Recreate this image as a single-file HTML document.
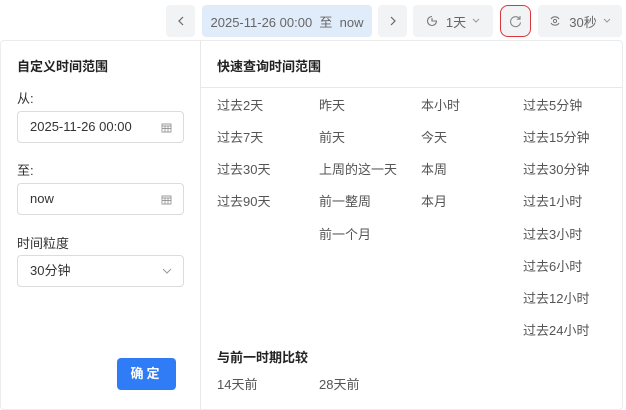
<!DOCTYPE html>
<html><head><meta charset="utf-8"><style>
*{box-sizing:border-box;margin:0;padding:0}
body{width:626px;height:406px;background:#fff;font-family:"Liberation Sans","Noto Sans CJK SC",sans-serif;position:relative;overflow:hidden;color:#333}
.btn{position:absolute;top:5px;height:32px;background:#f2f3f5;border-radius:4px;color:#666;font-size:13px;display:flex;align-items:center;justify-content:center}
.panel{position:absolute;left:0;top:40px;width:623px;height:370px;border:1px solid #ececec;border-radius:4px;background:#fff}
.a{position:absolute;font-size:13px;color:#555;white-space:nowrap}
.h{position:absolute;font-size:13px;font-weight:bold;color:#222}
.inp{position:absolute;left:17px;width:167px;height:32px;border:1px solid #dcdcdc;border-radius:4px;font-size:13px;color:#333;padding-left:12px;line-height:30px}
.inp svg{position:absolute;right:11px;top:10px}
</style></head><body>
<div class="btn" style="left:166px;width:29px"><svg width="8" height="10"><path d="M6 1L2 5l4 4" fill="none" stroke="#666" stroke-width="1.2"/></svg></div>
<div class="btn" style="left:202px;width:170px;background:#e1ecfb">2025-11-26 00:00&nbsp;&nbsp;至&nbsp;&nbsp;now</div>
<div class="btn" style="left:378px;width:29px"><svg width="8" height="10"><path d="M2 1l4 4-4 4" fill="none" stroke="#666" stroke-width="1.2"/></svg></div>
<div class="btn" style="left:413px;width:80px"><svg width="12" height="12" style="margin-right:8px"><path d="M6 1.5A4.5 4.5 0 1 0 10.5 6H6V3" fill="none" stroke="#777" stroke-width="1.1"/></svg>1天<svg width="8" height="6" style="margin-left:6px"><path d="M1 1l3 3 3-3" fill="none" stroke="#999"/></svg></div>
<div class="btn" style="left:500px;width:31px;border:1px solid #d9363e;border-radius:8px"><svg width="13" height="13"><path d="M10.8 4A5 5 0 1 0 11.5 7.5M11 1v3.2H7.8" fill="none" stroke="#888" stroke-width="1.1"/></svg></div>
<div class="btn" style="left:538px;width:84px"><svg width="12" height="12" style="margin-right:8px"><path d="M2 4A4.5 4 0 0 1 10 4M2 8A4.5 4 0 0 0 10 8" fill="none" stroke="#777" stroke-width="1.1"/><circle cx="6" cy="6" r="1.6" fill="none" stroke="#777"/></svg>30秒<svg width="8" height="6" style="margin-left:6px"><path d="M1 1l3 3 3-3" fill="none" stroke="#999"/></svg></div>
<div class="panel">
<div style="position:absolute;left:199px;top:0;bottom:0;width:1px;background:#e8e8e8"></div>
<div style="position:absolute;left:200px;right:0;top:46px;height:1px;background:#e8e8e8"></div>
</div>
<div class="h" style="left:17px;top:56px">自定义时间范围</div>
<div class="a" style="left:17px;top:88px;color:#333">从:</div>
<div class="inp" style="top:111px">2025-11-26 00:00<svg width="11" height="11"><path d="M1 2h9v8H1zM1 4h9M1 6.5h9M4 4v6M7 4v6" fill="none" stroke="#999" stroke-width="0.9"/></svg></div>
<div class="a" style="left:17px;top:160px;color:#333">至:</div>
<div class="inp" style="top:183px">now<svg width="11" height="11"><path d="M1 2h9v8H1zM1 4h9M1 6.5h9M4 4v6M7 4v6" fill="none" stroke="#999" stroke-width="0.9"/></svg></div>
<div class="a" style="left:17px;top:233px;color:#333">时间粒度</div>
<div class="inp" style="top:255px">30分钟<svg width="10" height="7" style="top:12px"><path d="M1 1l4 4 4-4" fill="none" stroke="#999"/></svg></div>
<div style="position:absolute;left:117px;top:358px;width:59px;height:32px;background:#2f7cf6;border-radius:4px;color:#fff;font-size:13px;font-weight:bold;text-align:center;line-height:32px;letter-spacing:3px">确定</div>
<div class="h" style="left:217px;top:56px">快速查询时间范围</div>
<div class="a" style="left:217px;top:95px">过去2天</div><div class="a" style="left:217px;top:127px">过去7天</div><div class="a" style="left:217px;top:159px">过去30天</div><div class="a" style="left:217px;top:191px">过去90天</div>
<div class="a" style="left:319px;top:95px">昨天</div><div class="a" style="left:319px;top:127px">前天</div><div class="a" style="left:319px;top:159px">上周的这一天</div><div class="a" style="left:319px;top:191px">前一整周</div><div class="a" style="left:319px;top:224px">前一个月</div>
<div class="a" style="left:421px;top:95px">本小时</div><div class="a" style="left:421px;top:127px">今天</div><div class="a" style="left:421px;top:159px">本周</div><div class="a" style="left:421px;top:191px">本月</div>
<div class="a" style="left:523px;top:95px">过去5分钟</div><div class="a" style="left:523px;top:127px">过去15分钟</div><div class="a" style="left:523px;top:159px">过去30分钟</div><div class="a" style="left:523px;top:191px">过去1小时</div><div class="a" style="left:523px;top:224px">过去3小时</div><div class="a" style="left:523px;top:256px">过去6小时</div><div class="a" style="left:523px;top:288px">过去12小时</div><div class="a" style="left:523px;top:320px">过去24小时</div>
<div class="h" style="left:217px;top:347px">与前一时期比较</div>
<div class="a" style="left:217px;top:374px">14天前</div><div class="a" style="left:319px;top:374px">28天前</div>
</body></html>
